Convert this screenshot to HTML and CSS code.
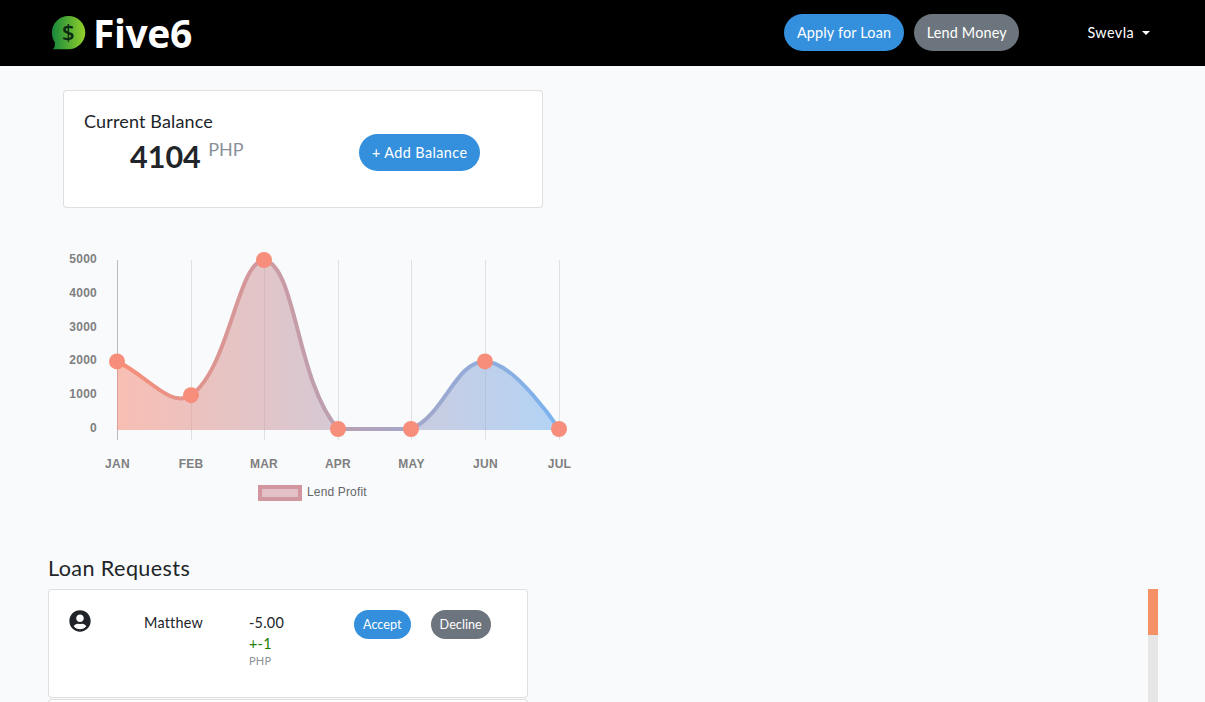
FILE: index.html
```html
<!DOCTYPE html>
<html>

<head>
    <meta name="viewport" content="width=device-width, initial-scale=1.0">
    <title>Five6</title>
    <link rel="stylesheet" href="styles.css">
</head>

<body>

    <nav class="topbar">
        <a class="brand" href="#">
            <svg class="brand-icon" width="36" height="36" viewBox="0 0 36 36">
                <defs>
                    <linearGradient id="logoGrad" x1="0" y1="0" x2="1" y2="0">
                        <stop offset="0" stop-color="#16883c" />
                        <stop offset="1" stop-color="#93d02a" />
                    </linearGradient>
                </defs>
                <path fill="url(#logoGrad)" d="M17.500 1C26.800 1 34.300 8.500 34.300 17.500S26.800 34.300 17.500 34.300H1.500C3.300 33.300 4 31.800 3.900 27.500 2 24.800 .9 21.300 .9 17.500 .9 8.500 8.200 1 17.500 1Z" />
                <text class="brand-dollar" x="17.500" y="25" text-anchor="middle">$</text>
            </svg>
            <span class="brand-name">Five6</span>
        </a>
        <div class="topbar-actions">
            <a class="btn btn-primary btn-nav" href="#">Apply for Loan</a>
            <a class="btn btn-secondary btn-nav btn-lend" href="#">Lend Money</a>
        </div>
        <a class="user-menu" href="#">Swevla<span class="caret"></span></a>
    </nav>

    <main class="content">
        <section class="balance-card">
            <div class="balance-info">
                <div class="balance-title">Current Balance</div>
                <div class="balance-amount">4104 <span class="balance-currency">PHP</span></div>
            </div>
            <a class="btn btn-primary btn-add" href="#">+ Add Balance</a>
        </section>

        <svg class="profit-chart" width="540" height="270" viewBox="48 240 540 270">
            <defs>
                <linearGradient id="lineGrad" gradientUnits="userSpaceOnUse" x1="117" y1="0" x2="559" y2="0">
                    <stop offset="0" stop-color="#f88d77" />
                    <stop offset="1" stop-color="#7ab3f0" />
                </linearGradient>
            </defs>

            <g class="grid">
                <line class="grid-first" x1="117.500" y1="260" x2="117.500" y2="440" />
                <line x1="191.500" y1="260" x2="191.500" y2="440" />
                <line x1="264.500" y1="260" x2="264.500" y2="440" />
                <line x1="338.500" y1="260" x2="338.500" y2="440" />
                <line x1="411.500" y1="260" x2="411.500" y2="440" />
                <line x1="485.500" y1="260" x2="485.500" y2="440" />
                <line x1="559.500" y1="260" x2="559.500" y2="440" />
            </g>

            <path class="area" d="M117 361.400C146.600 374.900 170.600 409.200 191 395.200C229.600 368.600 237.700 260 264.500 260C296.500 267.400 296 380.700 338 429C354.800 429 386.500 429 411.500 429C445.300 413.500 455.500 361.400 485 361.400C514.500 361.400 559 429 559 429L559 430L117 430Z" />
            <path class="line" d="M117 361.400C146.600 374.900 170.600 409.200 191 395.200C229.600 368.600 237.700 260 264.500 260C296.500 267.400 296 380.700 338 429C354.800 429 386.500 429 411.500 429C445.300 413.500 455.500 361.400 485 361.400C514.500 361.400 559 429 559 429" />

            <g class="points">
                <circle cx="117" cy="361.400" r="8" />
                <circle cx="191" cy="395.200" r="8" />
                <circle cx="264" cy="260" r="8" />
                <circle cx="338" cy="429" r="8" />
                <circle cx="411" cy="429" r="8" />
                <circle cx="485" cy="361.400" r="8" />
                <circle cx="559" cy="429" r="8" />
            </g>

            <g class="y-labels">
                <text x="97" y="263">5000</text>
                <text x="97" y="297">4000</text>
                <text x="97" y="331">3000</text>
                <text x="97" y="364">2000</text>
                <text x="97" y="398">1000</text>
                <text x="97" y="432">0</text>
            </g>
            <g class="x-labels">
                <text x="117.500" y="468">JAN</text>
                <text x="191" y="468">FEB</text>
                <text x="264" y="468">MAR</text>
                <text x="338" y="468">APR</text>
                <text x="411.500" y="468">MAY</text>
                <text x="485.500" y="468">JUN</text>
                <text x="559.500" y="468">JUL</text>
            </g>

            <rect class="legend-box" x="260" y="487" width="40" height="12" />
            <text class="legend-text" x="307" y="496">Lend Profit</text>
        </svg>

        <h2 class="section-title">Loan Requests</h2>

        <div class="loan-area">
            <ul class="loan-list">
                <li class="loan-row">
                    <svg class="loan-avatar" width="22" height="22" viewBox="0 0 496 512">
                        <path d="M248 8C111 8 0 119 0 256s111 248 248 248 248-111 248-248S385 8 248 8zm0 96c48.600 0 88 39.400 88 88s-39.400 88-88 88-88-39.400-88-88 39.400-88 88-88zm0 344c-58.700 0-111.300-26.600-146.500-68.200 18.800-35.400 55.600-59.800 98.500-59.800 2.400 0 4.800.4 7.100 1.100 13 4.200 26.600 6.900 40.900 6.900 14.300 0 28-2.700 40.900-6.900 2.300-.7 4.700-1.100 7.100-1.100 42.900 0 79.700 24.400 98.500 59.800C359.300 421.400 306.700 448 248 448z" />
                    </svg>
                    <div class="loan-name">Matthew</div>
                    <div class="loan-amount">
                        <div>-5.00</div>
                        <div class="loan-interest">+-1</div>
                        <div class="loan-currency">PHP</div>
                    </div>
                    <div class="loan-actions">
                        <a class="btn btn-small btn-primary" href="#">Accept</a>
                        <a class="btn btn-small btn-secondary" href="#">Decline</a>
                    </div>
                </li>
                <li class="loan-row"></li>
            </ul>
            <div class="scroll-track">
                <div class="scroll-thumb"></div>
            </div>
        </div>
    </main>

</body>

</html>
```

FILE: styles.css
```css
html,
body {
    margin: 0;
    height: 100%;
    overflow: hidden;
}

body {
    background: #f8fafc;
    color: #212529;
    font-family: "Lato", "Open Sans", sans-serif;
    font-size: 14.4px;
    letter-spacing: 0.25px;
}

.topbar {
    background: #000;
    height: 66px;
    box-sizing: border-box;
    display: flex;
    align-items: center;
    padding: 0 55px 1px 51px;
}

.brand {
    display: flex;
    align-items: center;
    gap: 6px;
    color: #fff;
    text-decoration: none;
}

.brand-dollar {
    font-family: "Open Sans", sans-serif;
    font-size: 22px;
    font-weight: 600;
    fill: #0c2a12;
}

.brand-name {
    font-family: "Open Sans", sans-serif;
    font-size: 39px;
    font-weight: 700;
    letter-spacing: -0.4px;
    line-height: 1;
}

.topbar-actions {
    display: flex;
    gap: 10px;
    margin-left: auto;
}

.user-menu {
    margin-left: 68px;
    color: #fff;
    text-decoration: none;
    display: flex;
    align-items: center;
    letter-spacing: 0.4px;
}

.caret {
    width: 0;
    height: 0;
    margin-left: 8px;
    border-top: 4px solid #fff;
    border-left: 4px solid transparent;
    border-right: 4px solid transparent;
}

.btn {
    display: inline-block;
    box-sizing: border-box;
    padding: 0 13px;
    height: 37px;
    line-height: 37px;
    border-radius: 18.5px;
    color: #fff;
    text-decoration: none;
    white-space: nowrap;
}

.btn-primary {
    background: #3490dc;
}

.btn-secondary {
    background: #6c757d;
}

.btn-nav {
    letter-spacing: 0.18px;
}

.btn-lend {
    padding: 0 12.5px;
}

.btn-add {
    align-self: flex-start;
    margin-top: 24px;
    letter-spacing: 0.4px;
}

.btn-small {
    height: 29px;
    line-height: 29px;
    padding: 0 9px;
    font-size: 12.6px;
    border-radius: 14.500px;
    letter-spacing: 0.05px;
}

.content {
    padding: 24px 0 0 48px;
}

.balance-card {
    margin-left: 15px;
    width: 480px;
    height: 118px;
    box-sizing: border-box;
    background: #fff;
    border: 1px solid rgba(0, 0, 0, 0.125);
    border-radius: 4px;
    padding: 19px 20px 20px;
    display: flex;
    align-items: center;
}

.balance-info {
    width: 275px;
    align-self: flex-start;
}

.balance-title {
    font-size: 18px;
    line-height: 22px;
    letter-spacing: 0.15px;
}

.balance-amount {
    margin-left: 46px;
    font-size: 30.5px;
    font-weight: 700;
    line-height: 34px;
    letter-spacing: 0;
}

.balance-currency {
    font-size: 18px;
    font-weight: 400;
    color: #8a9199;
    vertical-align: 12px;
}

.profit-chart {
    display: block;
    margin-top: 32px;
    font-family: "Liberation Sans", sans-serif;
}

.grid line {
    stroke: rgba(0, 0, 0, 0.1);
    stroke-width: 1;
}

.grid .grid-first {
    stroke: rgba(0, 0, 0, 0.25);
}

.area {
    fill: url(#lineGrad);
    fill-opacity: 0.55;
}

.line {
    fill: none;
    stroke: url(#lineGrad);
    stroke-width: 4;
}

.points circle {
    fill: #f68e7b;
}

.y-labels text,
.x-labels text {
    font-size: 12px;
    font-weight: 700;
    fill: #7f7f7f;
}

.y-labels text {
    text-anchor: end;
}

.x-labels text {
    text-anchor: middle;
}

.legend-box {
    fill: #e3c1c7;
    stroke: #d1969f;
    stroke-width: 4;
}

.legend-text {
    font-size: 12px;
    fill: #666;
    letter-spacing: 0.15px;
}

.section-title {
    margin: 45px 0 8px;
    font-size: 21.6px;
    font-weight: 400;
    line-height: 26px;
    letter-spacing: 0.4px;
}

.loan-area {
    display: flex;
    height: 113px;
    overflow: hidden;
}

.loan-list {
    list-style-type: none;
    margin: 0;
    padding: 0;
    width: 480px;
}

.loan-row {
    height: 109px;
    margin-bottom: 1px;
    box-sizing: border-box;
    background: #fff;
    border: 1px solid rgba(0, 0, 0, 0.125);
    border-radius: 4px;
    padding: 20px;
    display: grid;
    grid-template-columns: 75px 105px 105px 1fr;
    align-items: start;
}

.loan-avatar {
    fill: currentColor;
}

.loan-name {
    line-height: 26px;
}

.loan-amount {
    line-height: 26px;
}

.loan-interest {
    color: #228000;
    line-height: 16px;
}

.loan-currency {
    color: #8a9199;
    font-size: 11px;
    line-height: 18px;
}

.loan-actions {
    display: flex;
    gap: 20px;
}

.scroll-track {
    margin-left: 620px;
    width: 10px;
    height: 100%;
    background: #e6e6e6;
}

.scroll-thumb {
    height: 46px;
    background: #f59167;
}
```
